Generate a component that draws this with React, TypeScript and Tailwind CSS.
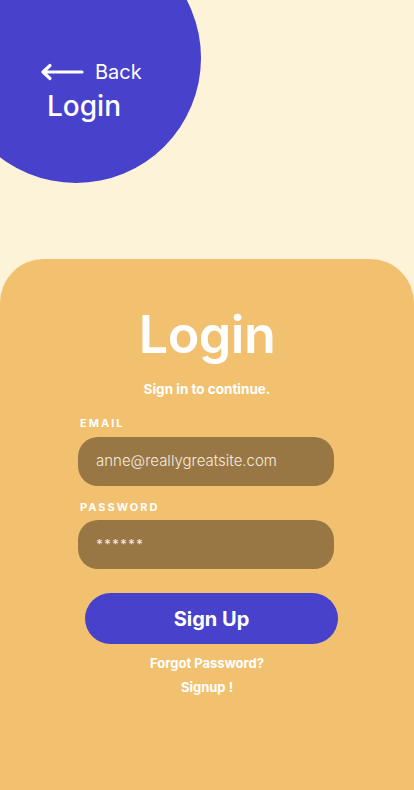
export default function App() {
  return (
    <div
      className="relative flex min-h-[790px] w-full flex-col overflow-hidden bg-[#fcf3d9]"
      style={{ fontFamily: 'Inter, "Noto Sans", sans-serif' }}
    >
      {/* Header with circle */}
      <div className="relative h-[259px] shrink-0">
        <div className="absolute left-[-49px] top-[-67px] h-[250px] w-[250px] rounded-full bg-[#4841cc]" />
        <div className="relative flex flex-col pl-[40px] pt-[62px] text-white">
          <div className="flex items-center gap-[11px]">
            <svg width="44" height="18" viewBox="0 0 44 18" fill="none">
              <path d="M42 9H3M10 2.5L3 9l7 6.5" stroke="white" strokeWidth="3.2" strokeLinecap="round" strokeLinejoin="round" />
            </svg>
            <span className="text-[20px] font-normal leading-none">Back</span>
          </div>
          <span className="ml-[7px] mt-[7px] text-[28px] font-medium leading-tight">Login</span>
        </div>
      </div>

      {/* Card */}
      <div className="flex flex-1 flex-col rounded-t-[44px] bg-[#f2c170] pb-[90px]">
        <h1 className="mt-[50px] text-center text-[52px] font-semibold leading-none tracking-[-0.5px] text-white">Login</h1>
        <p className="mt-[18px] text-center text-[13.5px] font-bold text-white">Sign in to continue.</p>

        <div className="ml-[78px] mt-[16px] flex w-[256px] flex-col">
          <label className="ml-[2px] text-[11px] font-bold tracking-[2px] text-white">EMAIL</label>
          <div className="mt-[5px] flex h-[49px] items-center rounded-[20px] bg-[#997745] pl-[18px] text-[15px] font-light text-[#f3ebde]">
            anne@reallygreatsite.com
          </div>
          <label className="ml-[2px] mt-[13px] text-[11px] font-bold tracking-[2px] text-white">PASSWORD</label>
          <div className="mt-[5px] flex h-[49px] items-center rounded-[20px] bg-[#997745] pl-[18px] text-[13px] font-semibold tracking-[1px] text-[#eae2d6]">
            ******
          </div>
        </div>

        <button className="ml-[85px] mt-[24px] flex h-[51px] w-[253px] items-center justify-center rounded-full bg-[#4841cc] text-[20px] font-bold text-white">
          Sign Up
        </button>

        <div className="mt-[10px] flex flex-col items-center gap-[4px] text-[13px] font-bold text-white">
          <span>Forgot Password?</span>
          <span>Signup !</span>
        </div>
      </div>
    </div>
  );
}
